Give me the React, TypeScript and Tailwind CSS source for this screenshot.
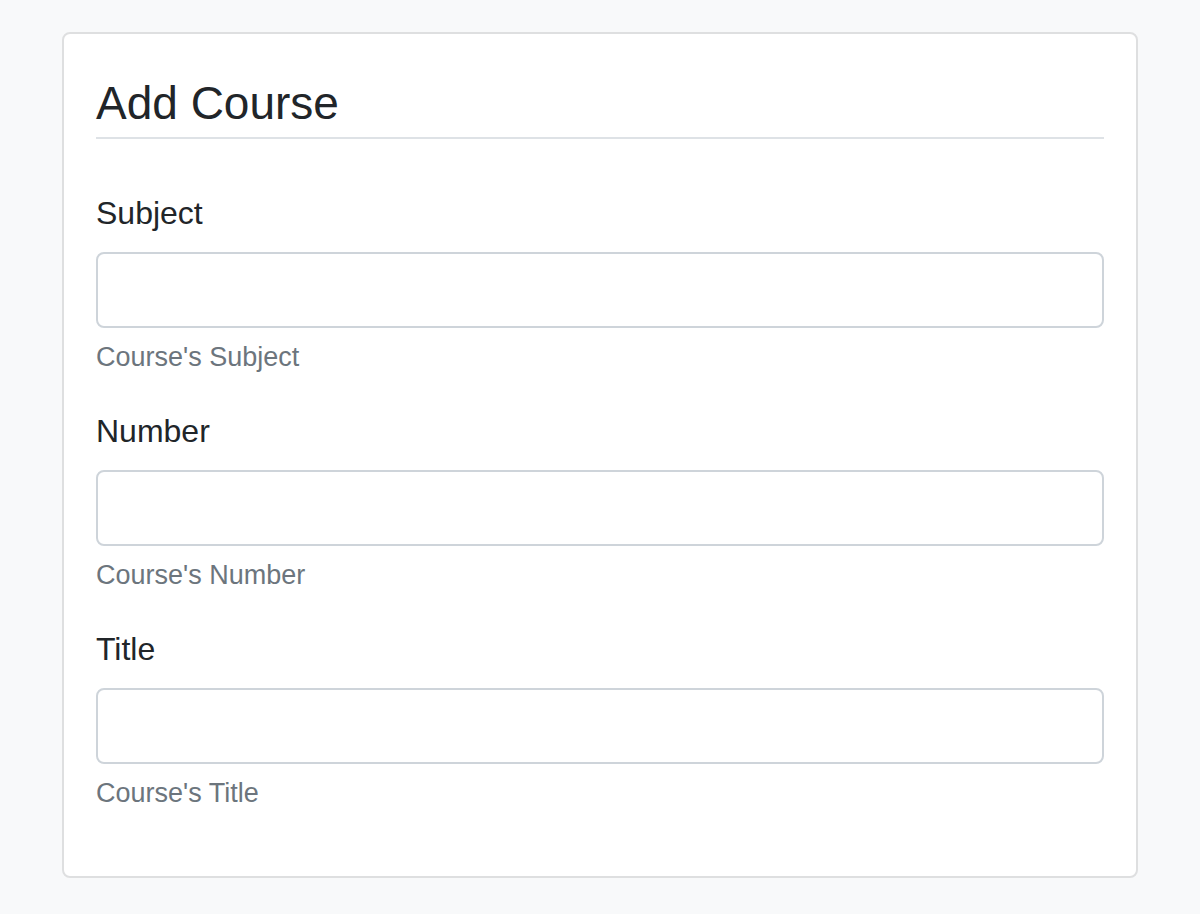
import React from "react";

const fields = [
  { id: "subject", label: "Subject", help: "Course's Subject" },
  { id: "number", label: "Number", help: "Course's Number" },
  { id: "title", label: "Title", help: "Course's Title" },
];

const App = () => {
  return (
    <div className="min-h-screen bg-[#f8f9fa] px-[62px] pt-[32px] pb-[37px] font-['Liberation_Sans',Arial,sans-serif] text-[#212529]">
      <div className="bg-white border-2 border-[#dedfe0] rounded-[8px] px-[32px] pt-[42px] pb-[63px]">
        <h2 className="text-[46px] leading-[1.2] font-normal pb-[6px] border-b-2 border-[#dee2e6]">
          Add Course
        </h2>
        <form className="mt-[50px] flex flex-col gap-[30px]">
          {fields.map((field) => (
            <div key={field.id}>
              <label
                htmlFor={field.id}
                className="block text-[32px] leading-[48px] mb-[15px]"
              >
                {field.label}
              </label>
              <input
                id={field.id}
                type="text"
                className="block w-full h-[76px] border-2 border-[#ced4da] rounded-[8px] px-[24px] text-[32px] outline-none"
              />
              <div className="mt-[9px] text-[27px] leading-[40px] text-[#6c757d]">
                {field.help}
              </div>
            </div>
          ))}
        </form>
      </div>
    </div>
  );
};

export default App;
